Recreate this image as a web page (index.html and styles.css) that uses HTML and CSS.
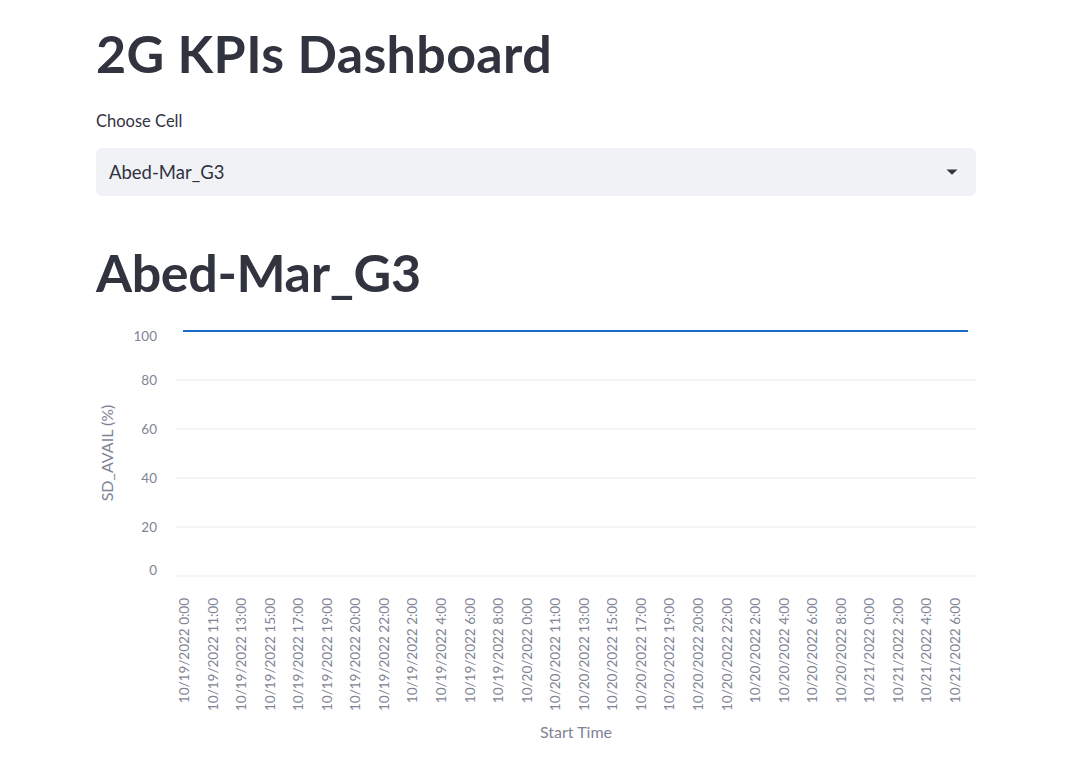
FILE: index.html
```html
<!DOCTYPE html>
<html lang="en">
<head>
<meta charset="utf-8">
<title>2G KPIs Dashboard</title>
<link rel="stylesheet" href="styles.css">
</head>
<body>
<main class="main">
  <h1 class="title">2G KPIs Dashboard</h1>
  <div class="field">
    <label class="field-label">Choose Cell</label>
    <div class="select">
      <span class="select-value">Abed-Mar_G3</span>
      <svg class="select-arrow" width="12" height="6" viewBox="0 0 12 6"><path d="M0.5 0.5 L11.5 0.5 L6 5.8 Z" fill="#31333f"/></svg>
    </div>
  </div>
  <h2 class="cell-title">Abed-Mar_G3</h2>
  <div class="chart">
    <svg class="chart-svg" width="880" height="440" viewBox="96 310 880 440">
      <g class="grid">
        <line x1="176" y1="380" x2="976" y2="380"/>
        <line x1="176" y1="429" x2="976" y2="429"/>
        <line x1="176" y1="478" x2="976" y2="478"/>
        <line x1="176" y1="527" x2="976" y2="527"/>
        <line x1="176" y1="576" x2="976" y2="576"/>
      </g>
      <line class="series" x1="183" y1="331" x2="968" y2="331"/>
      <g class="ytick">
        <text x="157" y="341">100</text>
        <text x="157" y="385">80</text>
        <text x="157" y="434">60</text>
        <text x="157" y="483">40</text>
        <text x="157" y="532">20</text>
        <text x="157" y="575">0</text>
      </g>
      <text class="axis-title" transform="translate(106,453) rotate(-90)">SD_AVAIL (%)</text>
      <g class="xtick">
        <text transform="translate(184.0,598) rotate(-90)">10/19/2022 0:00</text>
        <text transform="translate(212.6,598) rotate(-90)">10/19/2022 11:00</text>
        <text transform="translate(241.1,598) rotate(-90)">10/19/2022 13:00</text>
        <text transform="translate(269.7,598) rotate(-90)">10/19/2022 15:00</text>
        <text transform="translate(298.2,598) rotate(-90)">10/19/2022 17:00</text>
        <text transform="translate(326.8,598) rotate(-90)">10/19/2022 19:00</text>
        <text transform="translate(355.3,598) rotate(-90)">10/19/2022 20:00</text>
        <text transform="translate(383.9,598) rotate(-90)">10/19/2022 22:00</text>
        <text transform="translate(412.4,598) rotate(-90)">10/19/2022 2:00</text>
        <text transform="translate(441.0,598) rotate(-90)">10/19/2022 4:00</text>
        <text transform="translate(469.6,598) rotate(-90)">10/19/2022 6:00</text>
        <text transform="translate(498.1,598) rotate(-90)">10/19/2022 8:00</text>
        <text transform="translate(526.7,598) rotate(-90)">10/20/2022 0:00</text>
        <text transform="translate(555.2,598) rotate(-90)">10/20/2022 11:00</text>
        <text transform="translate(583.8,598) rotate(-90)">10/20/2022 13:00</text>
        <text transform="translate(612.3,598) rotate(-90)">10/20/2022 15:00</text>
        <text transform="translate(640.9,598) rotate(-90)">10/20/2022 17:00</text>
        <text transform="translate(669.4,598) rotate(-90)">10/20/2022 19:00</text>
        <text transform="translate(698.0,598) rotate(-90)">10/20/2022 20:00</text>
        <text transform="translate(726.6,598) rotate(-90)">10/20/2022 22:00</text>
        <text transform="translate(755.1,598) rotate(-90)">10/20/2022 2:00</text>
        <text transform="translate(783.7,598) rotate(-90)">10/20/2022 4:00</text>
        <text transform="translate(812.2,598) rotate(-90)">10/20/2022 6:00</text>
        <text transform="translate(840.8,598) rotate(-90)">10/20/2022 8:00</text>
        <text transform="translate(869.3,598) rotate(-90)">10/21/2022 0:00</text>
        <text transform="translate(897.9,598) rotate(-90)">10/21/2022 2:00</text>
        <text transform="translate(926.4,598) rotate(-90)">10/21/2022 4:00</text>
        <text transform="translate(955.0,598) rotate(-90)">10/21/2022 6:00</text>
      </g>
      <text class="axis-title x-title" x="576" y="738">Start Time</text>
    </svg>
  </div>
</main>
</body>
</html>
```

FILE: styles.css
```css
html, body {
  margin: 0;
  padding: 0;
  background: #ffffff;
}

body {
  font-family: "Source Sans Pro", Lato, "Noto Sans", sans-serif;
  color: #31333f;
}

.main {
  width: 880px;
  margin: 0 0 0 96px;
  padding-top: 23px;
}

.title {
  margin: 0 0 26px 0;
  font-size: 52px;
  line-height: 60px;
  font-weight: 700;
  letter-spacing: 0.35px;
}

.field {
  display: flex;
  flex-direction: column;
}

.field-label {
  font-size: 16.5px;
  line-height: 24px;
  margin-bottom: 15px;
}

.select {
  height: 48px;
  background: #f0f2f6;
  border-radius: 6px;
  display: flex;
  align-items: center;
  justify-content: space-between;
  padding: 0 18px 0 13px;
  box-sizing: border-box;
}

.select-value {
  font-size: 18.5px;
}

.select-arrow {
  display: block;
}

.cell-title {
  margin: 46px 0 0 0;
  font-size: 52px;
  line-height: 60px;
  font-weight: 700;
  letter-spacing: -0.35px;
}

.chart {
  margin-top: 8px;
}

.chart-svg {
  display: block;
}

.grid line {
  stroke: #e9ebf0;
  stroke-width: 1;
}

.series {
  stroke: #1a6cc4;
  stroke-width: 2;
}

.ytick text {
  font-family: "Source Sans Pro", Lato, sans-serif;
  font-size: 13.5px;
  fill: #808495;
  text-anchor: end;
}

.xtick text {
  font-family: "Source Sans Pro", Lato, sans-serif;
  font-size: 13.5px;
  fill: #808495;
  text-anchor: end;
  dominant-baseline: central;
}

.axis-title {
  font-family: "Source Sans Pro", Lato, sans-serif;
  font-size: 16px;
  fill: #808495;
  text-anchor: middle;
  dominant-baseline: central;
}

.x-title {
  dominant-baseline: auto;
}
```
